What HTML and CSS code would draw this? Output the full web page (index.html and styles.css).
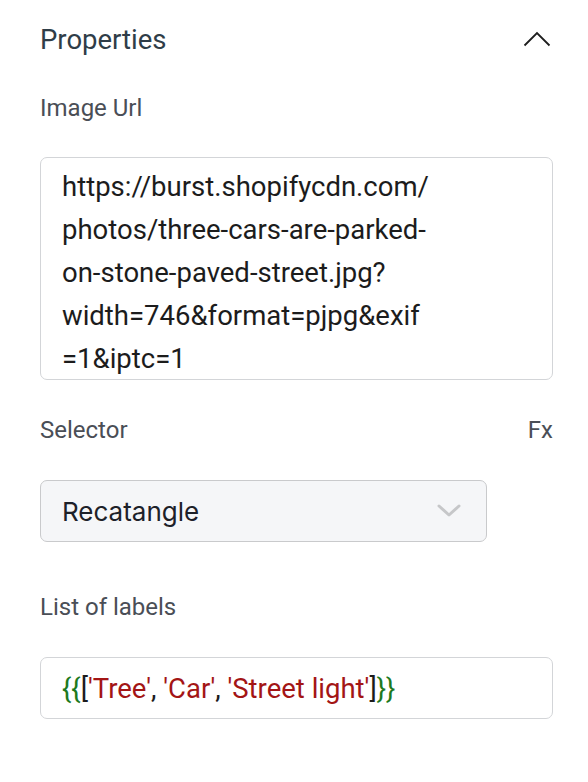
FILE: index.html
```html
<!DOCTYPE html>
<html>
<head>
<meta charset="utf-8">
<link rel="stylesheet" href="styles.css">
</head>
<body>
<div class="panel">
  <div class="header">
    <span class="title">Properties</span>
    <svg class="collapse" width="28" height="16" viewBox="0 0 28 16"><path d="M1.5 14.5 L14 2 L26.5 14.5" fill="none" stroke="#1e1e1e" stroke-width="1.8"/></svg>
  </div>
  <div class="label first">Image Url</div>
  <div class="textarea">https://burst.shopifycdn.com/<br>photos/three-cars-are-parked-<br>on-stone-paved-street.jpg?<br>width=746&amp;format=pjpg&amp;exif<br>=1&amp;iptc=1</div>
  <div class="label row">
    <span>Selector</span>
    <span class="fx">Fx</span>
  </div>
  <div class="select">
    <span class="select-value">Recatangle</span>
    <svg class="select-caret" width="26" height="16" viewBox="0 0 26 16"><path d="M3 3 L13 12 L23 3" fill="none" stroke="#c6c7c9" stroke-width="3" stroke-linecap="round" stroke-linejoin="round"/></svg>
  </div>
  <div class="label labels-label">List of labels</div>
  <div class="input"><span class="g">{{</span><span class="k">[</span><span class="s">'Tree'</span><span class="k">, </span><span class="s">'Car'</span><span class="k">, </span><span class="s">'Street light'</span><span class="k">]</span><span class="g">}}</span></div>
</div>
</body>
</html>
```
FILE: styles.css
```css
html, body {
  margin: 0;
  padding: 0;
  background: #ffffff;
}
.panel {
  padding: 20px 35px 0 40px;
  font-family: Roboto, "Liberation Sans", sans-serif;
}
.header {
  display: flex;
  align-items: center;
  justify-content: space-between;
  height: 40px;
}
.title {
  font-size: 27.5px;
  color: #2f3d48;
  line-height: 40px;
}
.collapse {
  margin-right: 2px;
  margin-top: -2px;
}
.label {
  font-size: 24px;
  line-height: 30px;
  color: #4a4e56;
}
.label.first {
  margin-top: 33px;
}
.textarea {
  box-sizing: border-box;
  margin-top: 34px;
  height: 223px;
  border: 1.5px solid #d3d5d8;
  border-radius: 7px;
  padding: 7px 20px 0 21px;
  font-size: 27.5px;
  line-height: 43px;
  color: #1c1c1c;
  overflow: hidden;
}
.row {
  display: flex;
  justify-content: space-between;
  margin-top: 35px;
}
.fx {
  color: #4a4e56;
}
.select {
  box-sizing: border-box;
  margin-top: 35px;
  width: 447px;
  height: 62px;
  border: 1.5px solid #c9cacc;
  border-radius: 7px;
  background: #f5f6f8;
  display: flex;
  align-items: center;
  justify-content: space-between;
  padding: 0 24px 0 21px;
}
.select-value {
  font-family: Inter, "Noto Sans", sans-serif;
  font-size: 26px;
  color: #1d2129;
}
.labels-label {
  margin-top: 50px;
}
.input {
  box-sizing: border-box;
  margin-top: 35px;
  height: 62px;
  border: 1.5px solid #d3d5d8;
  border-radius: 7px;
  padding: 0 20px 0 21px;
  display: flex;
  align-items: center;
  font-size: 27.5px;
  white-space: pre;
}
.g { color: #1e7a1e; }
.k { color: #1c1c1c; }
.s { color: #a31515; }
```
